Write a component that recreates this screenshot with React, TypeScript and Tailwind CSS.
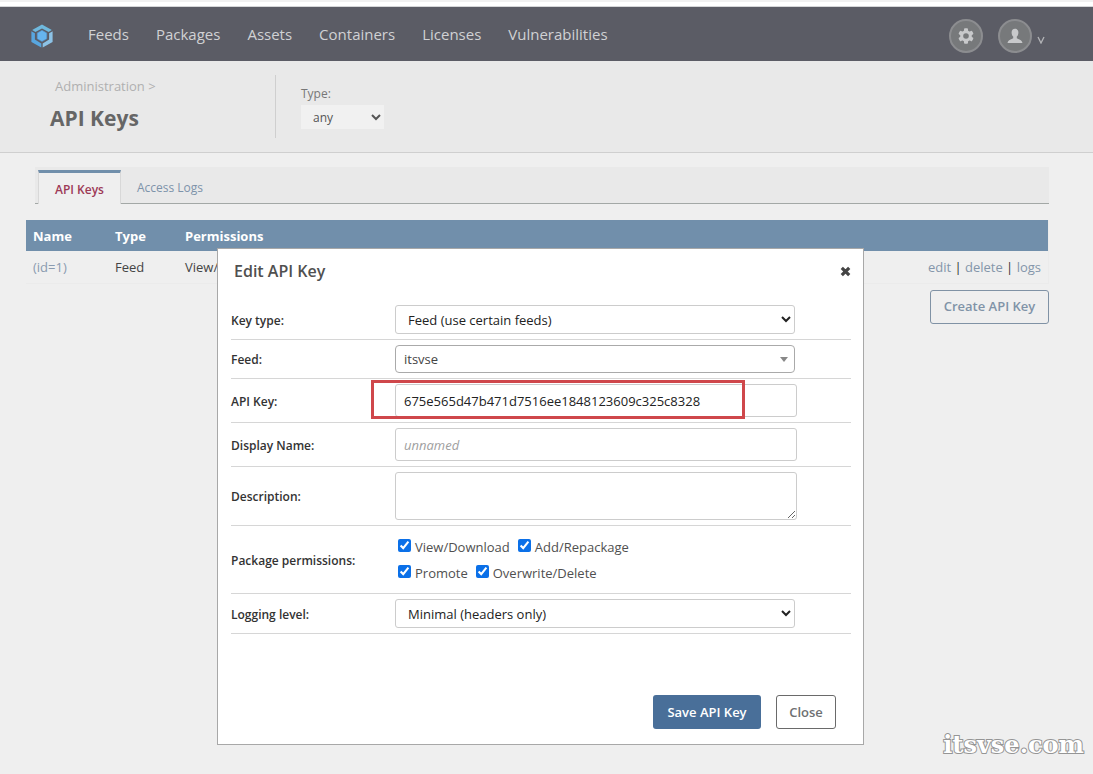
import type { ReactNode } from "react";

const navItems = ["Feeds", "Packages", "Assets", "Containers", "Licenses", "Vulnerabilities"];

const permissionRows = [
  ["View/Download", "Add/Repackage"],
  ["Promote", "Overwrite/Delete"],
];

function Logo() {
  return (
    <svg viewBox="0 0 22 24" className="h-6 w-[22px]" aria-hidden="true">
      <path d="M11 0.5 20.8 6 17.6 8 11 4.4 4.4 8 1.2 6Z" fill="#6fb9de" />
      <path d="M0.4 7.2 3.9 9.2V15.6L10.3 19.4V23.6L0.4 18Z" fill="#58a6df" />
      <path d="M21.6 7.2 18.1 9.2V15.6L11.7 19.4V23.6L21.6 18Z" fill="#8cc2e6" />
      <path d="M11 6.3 15.8 9V14.800L11 17.500 6.200 14.800V9Z" fill="#66b4ee" stroke="#4f8fc4" strokeWidth="0.6" />
    </svg>
  );
}

function GearIcon() {
  return (
    <svg viewBox="0 0 16 16" className="size-4" aria-hidden="true">
      <g fill="#c8c9cb">
        <rect x="6" y="0.3" width="4" height="15.4" rx="1" />
        <rect x="6" y="0.3" width="4" height="15.4" rx="1" transform="rotate(60 8 8)" />
        <rect x="6" y="0.3" width="4" height="15.4" rx="1" transform="rotate(120 8 8)" />
        <circle cx="8" cy="8" r="5.8" />
      </g>
      <circle cx="8" cy="8" r="2.8" fill="#77797b" />
    </svg>
  );
}

function UserIcon() {
  return (
    <svg viewBox="0 0 16 16" className="size-4" aria-hidden="true">
      <path
        fill="#c8c9cb"
        d="M8 .8c2.2 0 3.4 1.5 3.4 3.6 0 1.900-.7 3.300-1.600 4.200v1.600c1.200.9 5.200 1.300 5.700 4.800H.5c.5-3.500 4.500-3.900 5.700-4.800V8.600C5.300 7.700 4.600 6.300 4.600 4.400 4.600 2.300 5.800.8 8 .8Z"
      />
    </svg>
  );
}

function CloseIcon() {
  return (
    <svg viewBox="0 0 11 11" className="size-[11px]" aria-hidden="true">
      <path d="M1.800 1.800 9.200 9.200M9.200 1.800 1.800 9.200" stroke="#444" strokeWidth="3.200" />
    </svg>
  );
}

function Row({ label, htmlFor, children }: { label: string; htmlFor?: string; children: ReactNode }) {
  return (
    <div className="flex items-center border-b border-[#d6d6d6] py-[5px]">
      {htmlFor ? (
        <label htmlFor={htmlFor} className="w-[164px] shrink-0 pt-[2px] text-xs font-semibold text-[#333]">
          {label}
        </label>
      ) : (
        <span className="w-[164px] shrink-0 pt-[2px] text-xs font-semibold text-[#333]">{label}</span>
      )}
      {children}
    </div>
  );
}

function EditDialog() {
  return (
    <div className="absolute inset-x-0 top-[248px] flex justify-center pr-3">
      <section
        role="dialog"
        aria-labelledby="dialog-title"
        className="w-full max-w-[647px] border border-[#a8a8a8] bg-white pr-3 pb-[15px] pl-[13px]"
      >
        <header className="flex h-[51px] items-start justify-between pt-[11px] pl-[3px]">
          <h2 id="dialog-title" className="text-base leading-[22px] font-semibold text-[#505050]">
            Edit API Key
          </h2>
          <button type="button" aria-label="Close dialog" className="flex h-[22px] items-center">
            <CloseIcon />
          </button>
        </header>
        <form>
          <Row label="Key type:" htmlFor="key-type">
            <select
              id="key-type"
              className="h-[29px] w-[400px] rounded-[3px] border border-[#ccc] bg-white px-2 text-[13px] text-[#222]"
            >
              <option>Feed (use certain feeds)</option>
            </select>
          </Row>
          <Row label="Feed:" htmlFor="feed">
            <div className="relative w-[400px]">
              <select
                id="feed"
                className="block h-7 w-full appearance-none rounded border border-[#aaa] bg-white px-2 pt-[2px] text-[13px] text-[#444]"
              >
                <option>itsvse</option>
              </select>
              <svg viewBox="0 0 8 5" className="absolute top-3 right-[7px] h-[5px] w-2" aria-hidden="true">
                <path d="M0 0H8L4 5Z" fill="#888" />
              </svg>
            </div>
          </Row>
          <Row label="API Key:" htmlFor="api-key">
            <div className="relative">
              <input
                id="api-key"
                type="text"
                defaultValue="675e565d47b471d7516ee1848123609c325c8328"
                className="block h-[33px] w-[402px] rounded-[3px] border border-[#ccc] px-2 text-[13px] text-[#222]"
              />
              <div className="pointer-events-none absolute -top-1 -left-6 h-[39px] w-[374px] border-3 border-[#cf474b]" />
            </div>
          </Row>
          <Row label="Display Name:" htmlFor="display-name">
            <input
              id="display-name"
              type="text"
              placeholder="unnamed"
              className="h-[33px] w-[402px] rounded-[3px] border border-[#ccc] px-2 text-[13px] placeholder:text-[#a0a0a0] placeholder:italic"
            />
          </Row>
          <Row label="Description:" htmlFor="description">
            <textarea
              id="description"
              className="block h-12 w-[402px] rounded-[3px] border border-[#ccc] px-2 text-[13px]"
            />
          </Row>
          <Row label="Package permissions:">
            <div className="pt-[3px] pb-[2px] pl-[3px]">
              {permissionRows.map((row) => (
                <div key={row[0]} className="flex h-[26px] items-center gap-2">
                  {row.map((name) => (
                    <label key={name} className="flex items-center gap-1 text-[13px] text-[#505050]">
                      <input type="checkbox" defaultChecked className="mb-[3px] size-[13px] accent-[#0b70e8]" />
                      <span className="pt-[2px]">{name}</span>
                    </label>
                  ))}
                </div>
              ))}
            </div>
          </Row>
          <Row label="Logging level:" htmlFor="logging">
            <select
              id="logging"
              className="h-[29px] w-[400px] rounded-[3px] border border-[#ccc] bg-white px-2 text-[13px] text-[#222]"
            >
              <option>Minimal (headers only)</option>
            </select>
          </Row>
          <div className="flex justify-end gap-[15px] pt-[61px] pr-[15px]">
            <button
              type="button"
              className="h-[34px] w-[108px] rounded-[3px] bg-[#496f99] pt-px text-[13px] font-semibold text-white"
            >
              Save API Key
            </button>
            <button
              type="button"
              className="h-[34px] w-[60px] rounded-[3px] border border-[#6a6a6a] bg-white pt-px text-[13px] font-semibold text-[#6e7072]"
            >
              Close
            </button>
          </div>
        </form>
      </section>
    </div>
  );
}

export default function App() {
  return (
    <div className="relative min-h-screen bg-[#efefef] font-['Open_Sans','Noto_Sans',sans-serif] text-[13px] text-[#444]">
      <div className="h-[7px] border-t-2 border-b border-t-[#f1f1f1] border-b-[#d5d6d8] bg-white" />
      <header className="flex h-[54px] items-center bg-[#5b5c65] pr-[48px] pl-[31px]">
        <a href="#home" aria-label="Home" className="mt-1">
          <Logo />
        </a>
        <nav className="ml-[35px] flex gap-[27px] text-[15px] text-[#d0d1d4]">
          {navItems.map((item) => (
            <a key={item} href="#nav">
              {item}
            </a>
          ))}
        </nav>
        <div className="mt-1 ml-auto flex items-center gap-[15px]">
          <button
            type="button"
            aria-label="Settings"
            className="flex size-[34px] items-center justify-center rounded-full border-2 border-[#8c8d90] bg-[#77797b]"
          >
            <GearIcon />
          </button>
          <button type="button" aria-label="Account" className="flex items-center gap-[5px]">
            <span className="flex size-[34px] items-center justify-center rounded-full border-2 border-[#8c8d90] bg-[#77797b]">
              <UserIcon />
            </span>
            <svg viewBox="0 0 8 8" className="mt-2 size-2" aria-hidden="true">
              <path d="M1 1 4 7 7 1" fill="none" stroke="#b4b5b8" strokeWidth="1.300" />
            </svg>
          </button>
        </div>
      </header>

      <div className="flex h-[92px] border-b border-[#cfcfcf] bg-[#e9e9e9] pt-[14px] pb-[14px]">
        <div className="w-[276px] border-r border-[#cfcfcf] pl-[50px]">
          <a href="#administration" className="block pt-px pl-[5px] text-[13px] leading-5 text-[#b0b0b0]">
            Administration &gt;
          </a>
          <h1 className="mt-2 text-[21px] leading-7 font-bold text-[#666]">API Keys</h1>
        </div>
        <div className="flex flex-col items-start pt-[11px] pl-[25px] text-xs text-[#777]">
          <label htmlFor="type">Type:</label>
          <select id="type" className="mt-[3px] h-6 w-[83px] bg-[#f1f1f1] px-2 text-xs text-[#555]">
            <option>any</option>
          </select>
        </div>
      </div>

      <main className="pt-[14px] pr-[44px] pl-[26px]">
        <nav className="ml-[9px] flex h-[37px] items-end border-b border-[#a3a8a6] bg-[#e9e9e9] pl-[3px] text-xs">
          <a
            href="#keys"
            className="-mb-px flex h-[34px] items-center border-x border-t-3 border-x-[#d8d8d8] border-t-[#718fab] bg-[#efefef] px-4 pt-[2px] font-semibold text-[#9d3a56]"
          >
            API Keys
          </a>
          <a href="#logs" className="flex h-[33px] items-center px-4 pt-[2px] text-[#7d93aa]">
            Access Logs
          </a>
        </nav>
        <table className="mt-4 w-full border-r border-b border-[#ebebeb] text-left">
          <thead>
            <tr className="h-[31px] bg-[#718fab] text-white">
              <th className="w-[82px] px-[7px] pt-[2px] font-bold">Name</th>
              <th className="w-[70px] px-[7px] pt-[2px] font-bold">Type</th>
              <th className="px-[7px] pt-[2px] font-bold">Permissions</th>
              <th aria-label="Actions" />
            </tr>
          </thead>
          <tbody>
            <tr className="h-8">
              <td className="px-[7px] pt-[2px] text-[#8a9bb0]">(id=1)</td>
              <td className="px-[7px] pt-[2px]">Feed</td>
              <td className="px-[7px] pt-[2px]">View/</td>
              <td className="px-[7px] pt-[2px] text-right text-[#333]">
                <a href="#edit" className="text-[#8496aa]">edit</a>
                {" | "}
                <a href="#delete" className="text-[#8496aa]">delete</a>
                {" | "}
                <a href="#logs" className="text-[#8496aa]">logs</a>
              </td>
            </tr>
          </tbody>
        </table>
        <div className="mt-[6px] flex justify-end">
          <button
            type="button"
            className="h-[34px] w-[119px] rounded-[3px] border border-[#8092a5] pt-px text-[13px] font-semibold text-[#8093a7]"
          >
            Create API Key
          </button>
        </div>
      </main>

      <EditDialog />

      <div className="absolute right-[9px] bottom-[14px] font-['DejaVu_Serif',serif] text-[24px] leading-[30px] font-bold text-white [-webkit-text-stroke:2px_#959595] [paint-order:stroke_fill]">
        itsvse.com
      </div>
    </div>
  );
}
